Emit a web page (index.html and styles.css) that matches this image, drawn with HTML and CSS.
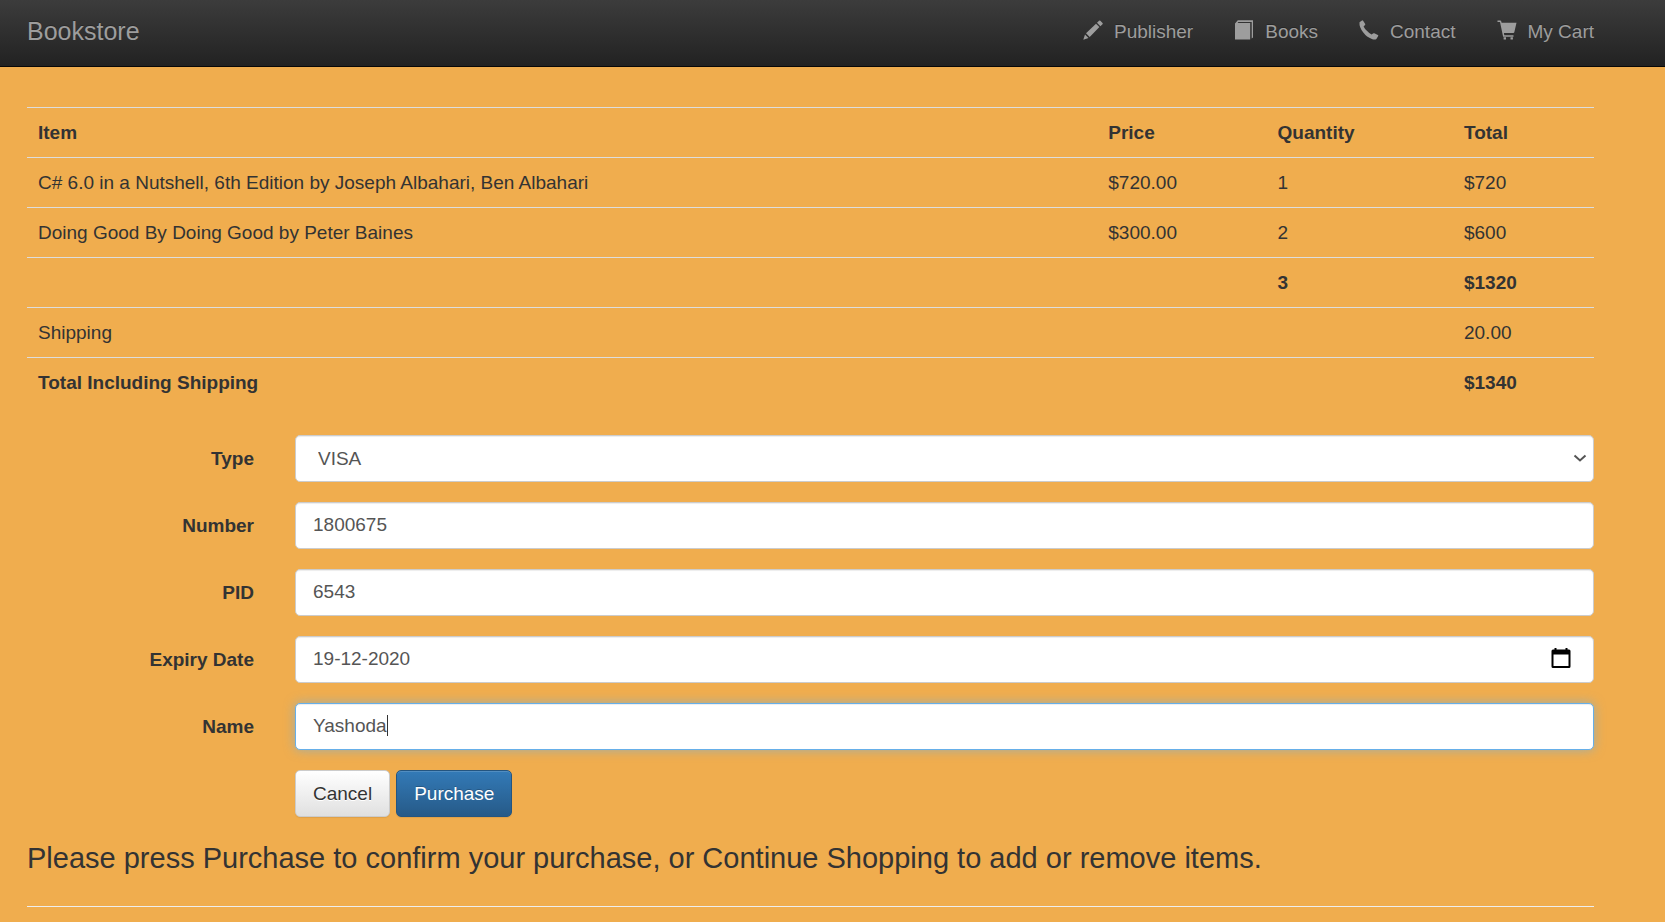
FILE: index.html
```html
<!DOCTYPE html>
<html lang="en">
<head>
<meta charset="utf-8">
<meta name="viewport" content="width=device-width, initial-scale=1">
<title>Bookstore</title>
<link rel="stylesheet" href="styles.css">
</head>
<body>
<header class="navbar">
  <a class="brand" href="#">Bookstore</a>
  <nav class="menu">
    <a class="menu-link" href="#"><svg class="icon" viewBox="0 0 20 20" aria-hidden="true"><path d="M.3 19.700 2 14.400 5.500 17.900zM3 13.300 13 3.700 16.400 7.100 6.700 16.900zM14 2.800 16 .800Q16.700.100 17.400.800L19.500 2.900Q20.100 3.600 19.500 4.200L17.400 6.200z"/></svg>Publisher</a>
    <a class="menu-link" href="#"><svg class="icon" viewBox="0 0 20 20" aria-hidden="true"><path d="M1 3.500 3.800.300H19V17.400L17.700 18.600V2H4.300L3.600 2.900H16.200V19.500H1z"/></svg>Books</a>
    <a class="menu-link" href="#"><svg class="icon" viewBox="0 0 20 20" aria-hidden="true"><path d="M.500 2.300 3 .500Q3.600.100 4.100.800L6.200 4Q6.500 4.600 6 5L4.600 6.400Q5.600 8.600 7.600 10.500 9.900 13 12.600 14.500L14 13.500Q14.700 12.900 15.300 13.300L18.900 14.900Q19.600 15.300 19.200 15.900L17.400 18.900Q15.800 19.900 12.800 18.900 7.800 17.300 4.100 12.300 0 7 .500 2.300z"/></svg>Contact</a>
    <a class="menu-link" href="#"><svg class="icon" viewBox="0 0 20 20" aria-hidden="true"><path d="M.500.500H3.300Q4 .500 4.200 1.200L4.600 2.800H19.500L17.300 12.200Q17.100 12.900 16.400 12.900H6.900L7.300 15.200H16.500V16.700H6.100L3 2H.500zM6.600 17.200H9V19.500H6.600zM13.500 17.200H15.900V19.500H13.500z"/></svg>My Cart</a>
  </nav>
</header>
<main class="content">
  <table class="order">
    <colgroup><col class="col-item"><col class="col-price"><col class="col-quantity"><col class="col-total"></colgroup>
    <thead>
      <tr><th scope="col">Item</th><th scope="col">Price</th><th scope="col">Quantity</th><th scope="col">Total</th></tr>
    </thead>
    <tbody>
      <tr><td>C# 6.0 in a Nutshell, 6th Edition by Joseph Albahari, Ben Albahari</td><td>$720.00</td><td>1</td><td>$720</td></tr>
      <tr><td>Doing Good By Doing Good by Peter Baines</td><td>$300.00</td><td>2</td><td>$600</td></tr>
      <tr class="sum"><td></td><td></td><td>3</td><td>$1320</td></tr>
      <tr><td>Shipping</td><td></td><td></td><td>20.00</td></tr>
      <tr class="sum"><td>Total Including Shipping</td><td></td><td></td><td>$1340</td></tr>
    </tbody>
  </table>
  <form class="payment">
    <label class="label" for="type">Type</label>
    <div class="field">
      <select class="control control-select" id="type"><option>VISA</option></select>
      <svg class="chevron" viewBox="0 0 14 14" aria-hidden="true"><path d="M1.500 4.500 7 9.500 12.500 4.500"/></svg>
    </div>
    <label class="label" for="number">Number</label>
    <div class="field"><input class="control" id="number" type="text" value="1800675"></div>
    <label class="label" for="pid">PID</label>
    <div class="field"><input class="control" id="pid" type="text" value="6543"></div>
    <label class="label" for="expiry">Expiry Date</label>
    <div class="field">
      <input class="control" id="expiry" type="text" value="19-12-2020">
      <button class="picker" type="button" aria-label="Choose date"><svg class="calendar" viewBox="0 0 20 20" aria-hidden="true"><path fill-rule="evenodd" d="M3.500 0H5.500V1.500H14.500V0H16.500V1.500H18Q19.500 1.500 19.500 3V18.500Q19.500 20 18 20H2Q.500 20 .500 18.500V3Q.500 1.500 2 1.500H3.500zM2.500 6.500V18H17.500V6.500z"/></svg></button>
    </div>
    <label class="label" for="name">Name</label>
    <div class="field">
      <input class="control control-active" id="name" type="text" value="Yashoda">
      <span class="caret"></span>
    </div>
    <div class="actions">
      <button class="button button-default" type="button">Cancel</button>
      <button class="button button-primary" type="submit">Purchase</button>
    </div>
  </form>
  <p class="notice">Please press Purchase to confirm your purchase, or Continue Shopping to add or remove items.</p>
  <hr class="divider">
</main>
</body>
</html>
```

FILE: styles.css
```css
* { box-sizing: border-box; }

body {
  margin: 0;
  background: #f0ad4e;
  color: #333;
  font: 19px/27px "Liberation Sans", Arial, sans-serif;
}

.navbar {
  display: flex;
  align-items: center;
  justify-content: space-between;
  height: 67px;
  padding: 0 71px 4px 27px;
  border-bottom: 1px solid #080808;
  background: linear-gradient(#3c3c3c, #222);
  text-shadow: 0 -1px 0 rgba(0, 0, 0, .25);
}

.brand, .menu-link { color: #9d9d9d; text-decoration: none; }
.brand { font-size: 25px; }
.menu { display: flex; gap: 41px; }
.menu-link { display: flex; align-items: center; gap: 11px; }

.icon {
  width: 20px;
  height: 20px;
  margin-bottom: 3px;
  fill: #9d9d9d;
}

.content { padding: 40px 71px 0 27px; }

.order {
  width: 100%;
  border-collapse: collapse;
  table-layout: fixed;
}

.col-item { width: 68.3%; }
.col-price { width: 10.8%; }
.col-quantity { width: 11.9%; }
.col-total { width: 9%; }

.order th, .order td {
  height: 50px;
  padding: 11px;
  border-top: 1px solid #ddd;
  text-align: left;
  vertical-align: top;
}

.sum td { font-weight: bold; }

.payment {
  display: grid;
  grid-template-columns: 227px 1fr;
  gap: 20px 41px;
  margin-top: 27px;
}

.label {
  padding-top: 10px;
  font-weight: bold;
  text-align: right;
}

.field { position: relative; }

.control {
  display: block;
  width: 100%;
  height: 47px;
  padding: 8px 17px;
  border: 1px solid #ccc;
  border-radius: 5px;
  background: #fff;
  box-shadow: inset 0 1px 1px rgba(0, 0, 0, .075);
  color: #555;
  font: inherit;
  outline: 0;
}

.control-select { padding-left: 22px; appearance: none; }

.control:focus, .control-active {
  border-color: #66afe9;
  box-shadow: inset 0 1px 1px rgba(0, 0, 0, .075), 0 0 11px rgba(102, 175, 233, .6);
}

.chevron {
  position: absolute;
  top: 16px;
  right: 7px;
  width: 14px;
  height: 14px;
  fill: none;
  stroke: #555;
  stroke-width: 2;
  pointer-events: none;
}

.picker {
  position: absolute;
  top: 12px;
  right: 23px;
  padding: 0;
  border: 0;
  background: none;
}

.calendar { display: block; width: 20px; height: 20px; }

.caret {
  position: absolute;
  top: 12px;
  left: 92px;
  width: 1px;
  height: 21px;
  background: #333;
}

.actions { display: flex; grid-column: 2; gap: 6px; }

.button {
  height: 47px;
  padding: 0 17px;
  border: 1px solid #ccc;
  border-radius: 5px;
  box-shadow: inset 0 1px 0 rgba(255, 255, 255, .15), 0 1px 1px rgba(0, 0, 0, .075);
  font: inherit;
}

.button-default {
  background: linear-gradient(#fff, #e0e0e0);
  color: #333;
  text-shadow: 0 1px 0 #fff;
}

.button-primary {
  border-color: #245580;
  background: linear-gradient(#337ab7, #265a88);
  color: #fff;
  text-shadow: 0 -1px 0 rgba(0, 0, 0, .2);
}

.notice {
  margin: 25px 0 0;
  font-size: 29px;
  line-height: 32px;
}

.divider {
  margin: 32px 0 15px;
  border: 0;
  border-top: 1px solid #eee;
}
```
